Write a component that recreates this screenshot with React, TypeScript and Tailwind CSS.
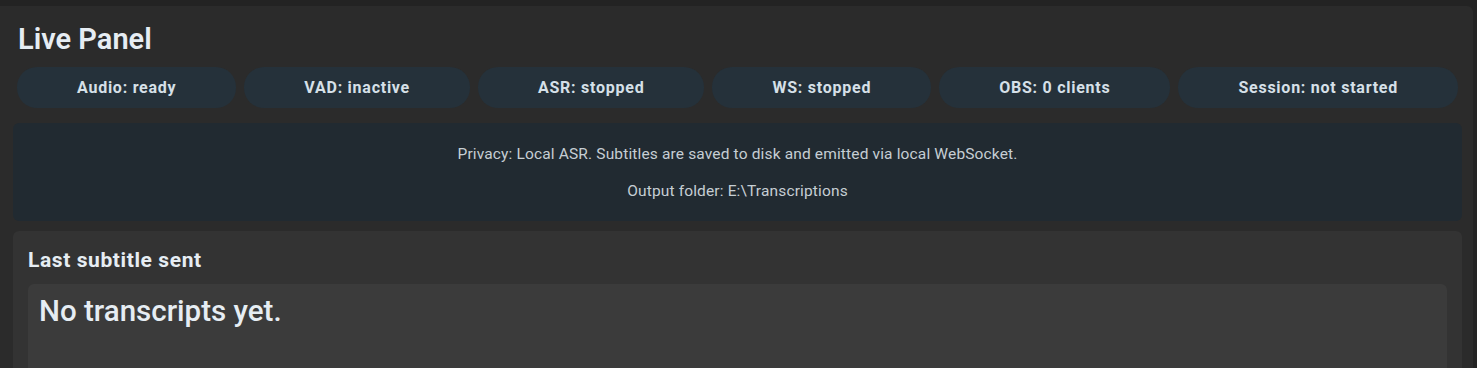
export default function App() {
  const pills = [
    "Audio: ready",
    "VAD: inactive",
    "ASR: stopped",
    "WS: stopped",
    "OBS: 0 clients",
    "Session: not started",
  ];

  return (
    <div className="h-screen overflow-hidden bg-[#232323] pt-[6px] pr-[4px] font-['Roboto',sans-serif]">
      <div className="h-full rounded-tr-md bg-[#2b2b2b] pl-[13px] pr-[11px]">
        {/* Title */}
        <h1 className="pl-[5px] pt-[15px] text-[29px] font-semibold leading-[36px] text-[#e6edf3]">Live Panel</h1>

        {/* Status pills */}
        <div className="mt-[10px] flex gap-[8px] px-[4px]">
          {pills.map((p) => (
            <div
              key={p}
              className="flex h-[41px] min-w-0 flex-auto items-center justify-center rounded-[20px] bg-[#25313a] px-[58px] text-[16px] font-bold tracking-[0.75px] whitespace-nowrap text-[#d6e0e8]"
            >
              {p}
            </div>
          ))}
        </div>

        {/* Privacy notice */}
        <div className="mt-[15px] flex h-[98px] flex-col items-center justify-center gap-[13px] rounded-md bg-[#212a31] text-[15.5px] leading-[24px] tracking-[0.15px] text-[#c6ced4]">
          <p>Privacy: Local ASR. Subtitles are saved to disk and emitted via local WebSocket.</p>
          <p>Output folder: E:\Transcriptions</p>
        </div>

        {/* Last subtitle */}
        <div className="mt-[10px] h-[200px] rounded-md bg-[#333333] px-[15px] pt-[18px]">
          <h2 className="text-[21px] leading-[22px] font-bold tracking-[0.6px] text-[#e6edf3]">Last subtitle sent</h2>
          <div className="mt-[13px] h-[150px] rounded-md bg-[#3b3b3b] px-[11px] pt-[10px]">
            <p className="text-[29.5px] leading-[34px] font-medium text-[#e6edf3]">No transcripts yet.</p>
          </div>
        </div>
      </div>
    </div>
  );
}
